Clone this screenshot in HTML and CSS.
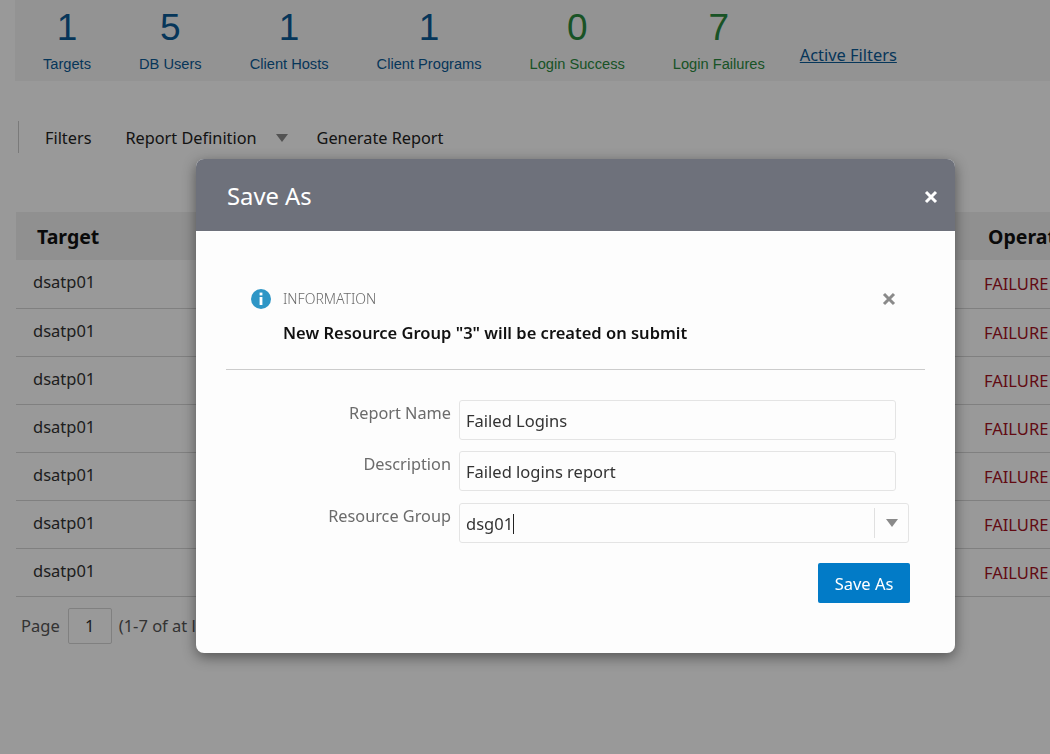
FILE: index.html
```html
<!DOCTYPE html>
<html lang="en">
  <head>
    <meta charset="UTF-8" />
    <title>Failed Logins</title>
    <link rel="stylesheet" href="styles.css">
  </head>
  <body>
    <div class="stats">
      <div class="stat"><div class="stat-num">1</div><div class="stat-label">Targets</div></div>
      <div class="stat"><div class="stat-num">5</div><div class="stat-label">DB Users</div></div>
      <div class="stat"><div class="stat-num">1</div><div class="stat-label">Client Hosts</div></div>
      <div class="stat"><div class="stat-num">1</div><div class="stat-label">Client Programs</div></div>
      <div class="stat green"><div class="stat-num">0</div><div class="stat-label">Login Success</div></div>
      <div class="stat green"><div class="stat-num">7</div><div class="stat-label">Login Failures</div></div>
      <a class="active-filters" href="#">Active Filters</a>
    </div>

    <div class="toolbar">
      <span class="tool">Filters</span>
      <span class="tool">Report Definition</span>
      <span class="tool-arrow"></span>
      <span class="tool">Generate Report</span>
    </div>

    <table class="report">
      <thead>
        <tr><th class="col-target">Target</th><th class="col-mid"></th><th class="col-op">Operation</th></tr>
      </thead>
      <tbody>
        <tr><td class="col-target">dsatp01</td><td></td><td class="col-op">FAILURE</td></tr>
        <tr><td class="col-target">dsatp01</td><td></td><td class="col-op">FAILURE</td></tr>
        <tr><td class="col-target">dsatp01</td><td></td><td class="col-op">FAILURE</td></tr>
        <tr><td class="col-target">dsatp01</td><td></td><td class="col-op">FAILURE</td></tr>
        <tr><td class="col-target">dsatp01</td><td></td><td class="col-op">FAILURE</td></tr>
        <tr><td class="col-target">dsatp01</td><td></td><td class="col-op">FAILURE</td></tr>
        <tr><td class="col-target">dsatp01</td><td></td><td class="col-op">FAILURE</td></tr>
      </tbody>
    </table>

    <div class="pager">
      <span class="page-word">Page</span>
      <span class="page-box">1</span>
      <span>(1-7 of at least 7)</span>
    </div>

    <div class="overlay"></div>

    <div class="modal">
      <div class="modal-head">
        <span class="modal-title">Save As</span>
        <svg class="modal-close" width="14" height="14" viewBox="0 0 14 14"><path d="M2 2 L12 12 M12 2 L2 12" stroke="#fff" stroke-width="3"/></svg>
      </div>
      <div class="modal-body">
        <div class="info">
          <svg class="info-icon" width="20" height="20" viewBox="0 0 20 20">
            <circle cx="10" cy="10" r="10" fill="#2e96c6"/>
            <rect x="8.6" y="3.6" width="2.8" height="2.8" fill="#fff"/>
            <rect x="8.6" y="8" width="2.8" height="8" fill="#fff"/>
          </svg>
          <div class="info-text">
            <div class="info-kind">INFORMATION</div>
            <div class="info-msg">New Resource Group "3" will be created on submit</div>
          </div>
          <svg class="info-close" width="14" height="14" viewBox="0 0 14 14"><path d="M2 2 L12 12 M12 2 L2 12" stroke="#8a8a8a" stroke-width="3"/></svg>
        </div>

        <div class="form">
          <div class="field">
            <label class="field-label">Report Name</label>
            <div class="input">Failed Logins</div>
          </div>
          <div class="field field-tight">
            <label class="field-label">Description</label>
            <div class="input">Failed logins report</div>
          </div>
          <div class="field">
            <label class="field-label">Resource Group</label>
            <div class="input combo">
              <span class="combo-value">dsg01</span>
              <span class="combo-btn"><span class="combo-arrow"></span></span>
            </div>
          </div>
        </div>

        <div class="actions">
          <button class="save-btn" type="button">Save As</button>
        </div>
      </div>
    </div>
  </body>
</html>
```

FILE: styles.css
```css
html,
body {
  height: 100%;
}
body {
  font-family: "Noto Sans", Arial, sans-serif;
  background-color: #fff;
  color: #333;
  margin: 0;
  overflow: hidden;
}
.stats {
  display: flex;
  align-items: flex-start;
  gap: 48px;
  height: 81px;
  margin-left: 15px;
  padding-left: 28px;
  background-color: #f5f5f5;
  font-family: "Liberation Sans", Arial, sans-serif;
  color: #0b5a96;
}
.stat {
  text-align: center;
  padding-top: 7px;
}
.stat-num {
  font-size: 37px;
  line-height: 41px;
}
.stat-label {
  font-size: 14.65px;
  line-height: 18px;
  margin-top: 7px;
  white-space: nowrap;
}
.green {
  color: #2a8a3e;
}
.active-filters {
  font-family: "Noto Sans", Arial, sans-serif;
  font-size: 16.4px;
  margin-top: 43px;
  margin-left: -13px;
  color: #0b5a96;
}
.toolbar {
  display: flex;
  align-items: center;
  height: 32px;
  margin: 40px 0 0 18px;
  padding: 1px 0 0 26px;
  box-sizing: border-box;
  border-left: 1px solid #ccc;
  font-size: 16.3px;
  color: #222;
}
.tool {
  margin-right: 34px;
}
.tool-arrow {
  width: 0;
  height: 0;
  margin: 0 29px 0 -15px;
  border-left: 6px solid transparent;
  border-right: 6px solid transparent;
  border-top: 8px solid #8a8a8a;
}
.report {
  width: 1100px;
  margin: 59px 0 0 16px;
  border-collapse: collapse;
  table-layout: fixed;
}
.report th {
  height: 48px;
  padding: 0;
  background-color: #f0f0f0;
  color: #111;
  font-size: 19.5px;
  font-weight: 700;
  text-align: left;
}
.report td {
  height: 48px;
  box-sizing: border-box;
  padding: 0;
  border-bottom: 1px solid #d6d6d6;
  font-size: 16.5px;
}
th.col-target {
  width: 181px;
  padding-left: 21px;
}
td.col-target {
  padding-left: 17px;
  padding-bottom: 4px;
}
.col-mid {
  width: 766px;
}
th.col-op {
  padding-left: 4px;
}
td.col-op {
  color: #a3121f;
}
.pager {
  display: flex;
  align-items: center;
  gap: 7px;
  margin: 11px 0 0 21px;
  font-size: 16.5px;
  color: #555;
}
.page-word {
  margin-right: 1px;
}
.page-box {
  width: 42px;
  height: 34px;
  line-height: 34px;
  border: 1px solid #d6d6d6;
  border-radius: 2px;
  text-align: center;
  color: #333;
}
.overlay {
  position: fixed;
  inset: 0;
  background-color: rgba(0, 0, 0, 0.4);
}
.modal {
  position: absolute;
  left: 196px;
  top: 159px;
  width: 759px;
  height: 494px;
  background-color: #fdfdfd;
  border-radius: 8px;
  box-shadow: 0 4px 14px rgba(0, 0, 0, 0.45);
  overflow: hidden;
}
.modal-head {
  display: flex;
  align-items: center;
  justify-content: space-between;
  height: 72px;
  padding: 0 17px 0 31px;
  background-color: #6e717b;
  border-bottom: 1px solid #fff;
}
.modal-title {
  color: #fff;
  font-size: 23.8px;
  margin-top: 1px;
}
.modal-close {
  margin-top: 4px;
}
.modal-body {
  padding: 0 30px;
}
.info {
  display: flex;
  align-items: flex-start;
  height: 138px;
  padding: 57px 29px 0 25px;
  border-bottom: 1px solid #ccc;
  box-sizing: border-box;
}
.info-icon {
  margin-right: 12px;
}
.info-text {
  flex: 1;
}
.info-kind {
  font-size: 14px;
  font-weight: 300;
  line-height: 20px;
  color: #6b6b6b;
}
.info-msg {
  margin-top: 14px;
  font-size: 16.5px;
  font-weight: 600;
  line-height: 20px;
  color: #111;
}
.info-close {
  margin-top: 3px;
}
.form {
  padding-top: 30px;
}
.field {
  display: flex;
  margin-bottom: 11px;
}
.field-tight {
  margin-bottom: 12px;
}
.field:last-child {
  margin-bottom: 0;
}
.field-label {
  width: 233px;
  padding-right: 8px;
  box-sizing: border-box;
  text-align: right;
  font-size: 16.3px;
  line-height: 26px;
  color: #6b6b6b;
}
.input {
  width: 437px;
  height: 40px;
  padding: 0 6px;
  box-sizing: border-box;
  border: 1px solid #e4e4e4;
  border-radius: 3px;
  font-size: 16.5px;
  line-height: 40px;
  color: #333;
}
.combo {
  display: flex;
  justify-content: space-between;
  width: 450px;
  padding-right: 0;
}
.combo-value {
  border-right: 1px solid #222;
  height: 20px;
  line-height: 20px;
  margin-top: 10px;
}
.combo-btn {
  display: flex;
  align-items: center;
  justify-content: center;
  width: 33px;
  height: 30px;
  margin-top: 4px;
  border-left: 1px solid #e0e0e0;
}
.combo-arrow {
  width: 0;
  height: 0;
  border-left: 6px solid transparent;
  border-right: 6px solid transparent;
  border-top: 8px solid #8a8a8a;
}
.actions {
  display: flex;
  justify-content: flex-end;
  padding: 20px 15px 0 0;
}
.save-btn {
  width: 92px;
  height: 40px;
  background-color: #027bc7;
  color: #fff;
  border: none;
  border-radius: 2px;
  font-family: "Noto Sans", Arial, sans-serif;
  font-size: 16.5px;
}
```
